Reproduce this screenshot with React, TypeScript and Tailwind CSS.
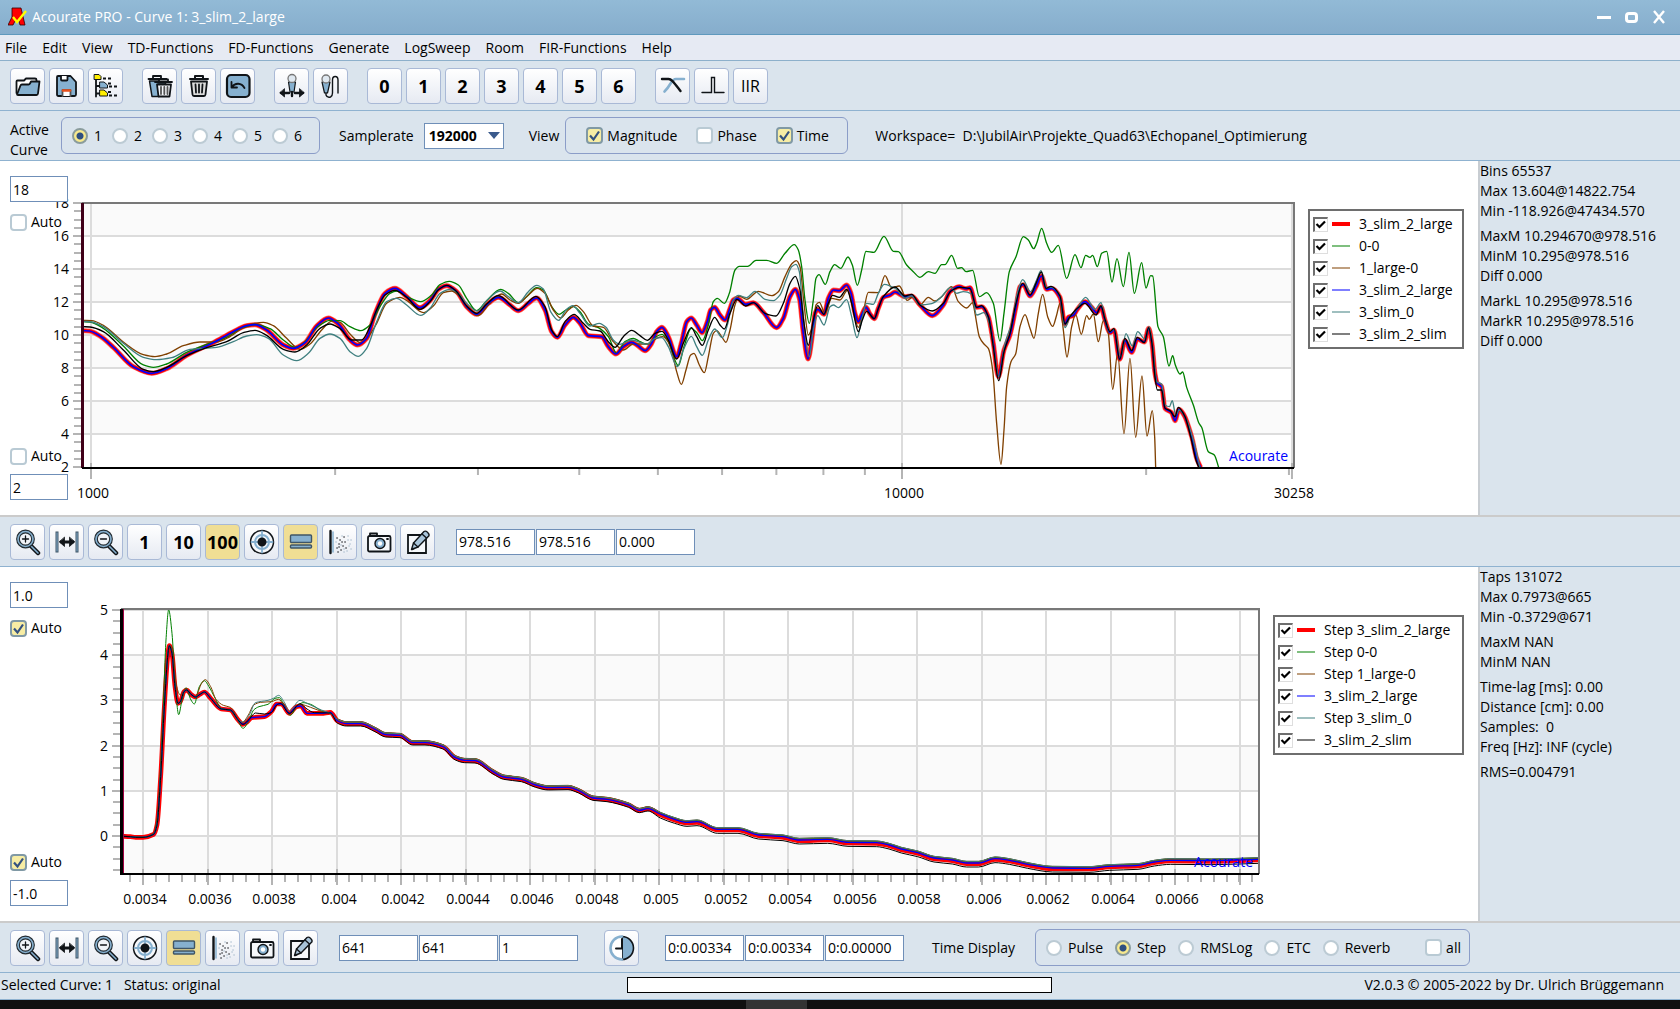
import React from "react";

type Point = [number, number];

// "x,y x,y ..." -> list of points, in thirds of a pixel
function parse(text: string): Point[] {
  return text
    .trim()
    .split(/\s+/)
    .map((pair) => pair.split(",").map(Number) as Point);
}

// monotone cubic, so that peaks and dips keep their height
function smooth(points: Point[]) {
  const n = points.length;
  const slope: number[] = [];
  for (let i = 0; i < n - 1; i++) {
    slope.push(
      (points[i + 1][1] - points[i][1]) / (points[i + 1][0] - points[i][0])
    );
  }
  const tangent = points.map((_, i) => {
    if (i === 0) return slope[0];
    if (i === n - 1) return slope[n - 2];
    const a = slope[i - 1];
    const b = slope[i];
    return a * b <= 0 ? 0 : (2 * a * b) / (a + b);
  });
  let d = `M${points[0][0]},${points[0][1]}`;
  for (let i = 0; i < n - 1; i++) {
    const [x0, y0] = points[i];
    const [x1, y1] = points[i + 1];
    const h = (x1 - x0) / 3;
    d += `C${(x0 + h).toFixed(1)},${(y0 + h * tangent[i]).toFixed(1)} ${(
      x1 - h
    ).toFixed(1)},${(y1 - h * tangent[i + 1]).toFixed(1)} ${x1},${y1}`;
  }
  return d;
}

const magMain = `250,452 268,453 300,468 340,502 400,560 455,580 500,566 560,526 640,488 700,455 740,437 765,434 800,450 850,495 880,505
915,488 950,438 985,414 1015,432 1050,480 1073,495 1100,475 1125,402 1155,340 1185,325 1220,350 1260,383 1290,362 1315,328 1340,317
1370,335 1400,380 1430,403 1465,370 1495,352 1530,375 1555,392 1585,370 1610,354 1635,390 1655,455 1672,472 1695,435 1720,412
1740,430 1765,467 1805,470 1825,500 1848,522 1870,500 1895,487 1915,498 1936,512 1955,490 1970,455 1986,442 2005,470 2030,530
2045,485 2060,425 2074,414 2090,435 2106,458 2122,425 2132,390 2144,382 2160,405 2175,420 2190,385 2200,360 2211,355 2237,373
2260,368 2290,397 2330,443 2350,415 2370,350 2386,328 2398,355 2410,460 2424,537 2438,460 2445,400 2453,388 2472,403 2485,355
2500,330 2518,332 2540,315 2553,340 2565,400 2575,425 2585,405 2598,382 2610,402 2623,416 2635,385 2650,352 2670,345 2685,336
2715,350 2735,348 2760,375 2797,407 2830,375 2850,335 2878,320 2898,326 2910,323 2930,382 2945,380 2965,410 2980,490 2995,590
3012,510 3030,465 3048,380 3060,320 3070,314 3090,348 3108,320 3124,288 3140,328 3155,325 3180,352 3195,432 3205,412 3220,406
3232,388 3255,365 3275,382 3290,398 3303,380 3315,420 3330,458 3342,450 3359,538 3375,482 3395,517 3412,477 3433,486 3446,445
3456,490 3465,580 3472,610 3485,620 3495,685 3515,698 3525,722 3537,688 3552,705 3575,770 3590,835 3602,862`;

const magSlimSlim = `250,440 270,441 310,455 370,510 430,568 460,575 500,562 560,527 620,503 680,485 730,458 765,451 800,466 850,508 885,516
920,495 960,445 990,432 1020,446 1055,480 1085,480 1110,440 1130,390 1155,345 1185,331 1220,352 1260,388 1290,365 1315,330 1340,316
1370,335 1400,378 1430,400 1460,372 1495,347 1555,390 1608,349 1635,380 1655,450 1672,470 1695,425 1722,403 1750,430 1770,448
1800,453 1825,485 1845,502 1870,470 1895,451 1920,467 1942,481 1965,460 1986,454 2005,480 2030,537 2050,490 2074,443 2090,470
2107,496 2125,450 2144,412 2160,435 2173,447 2190,400 2211,358 2237,378 2260,368 2295,400 2328,408 2350,370 2370,310 2386,289
2400,330 2412,430 2425,496 2440,420 2453,377 2472,403 2485,370 2498,346 2518,352 2540,328 2555,370 2575,455 2587,420 2600,394
2623,416 2635,385 2650,350 2685,321 2715,348 2735,343 2760,375 2797,393 2830,370 2853,333 2878,322 2910,326 2930,382 2945,377
2965,410 2980,500 2996,602 3012,515 3030,460 3048,370 3068,310 3090,345 3108,310 3124,276 3138,325 3153,319 3180,348 3195,432
3210,410 3232,385 3255,370 3288,405 3303,378 3315,418 3330,455 3342,446 3359,538 3375,475 3395,512 3412,472 3433,488 3446,443
3456,490 3465,590 3472,630 3485,630 3495,685 3510,692 3525,710 3535,682 3555,710 3572,770 3588,840 3596,862`;

const mag00 = `250,425 270,426 310,445 370,498 430,555 460,562 500,552 560,517 620,493 680,472 730,443 770,434 810,446 850,480 885,502
910,490 950,443 990,421 1020,422 1050,440 1082,452 1110,435 1140,380 1170,340 1190,333 1225,352 1262,365 1295,345 1320,314 1348,304
1375,315 1400,355 1430,392 1460,362 1502,328 1525,340 1555,368 1580,350 1610,323 1630,330 1655,380 1677,403 1695,392 1720,380
1740,395 1765,432 1795,443 1825,470 1850,520 1875,485 1900,475 1920,485 1942,493 1965,472 1986,463 2005,485 2035,557 2052,500
2074,445 2092,460 2107,482 2125,435 2140,365 2152,355 2173,370 2188,340 2205,270 2218,259 2243,259 2268,241 2300,241 2330,250
2355,220 2383,194 2395,210 2405,260 2415,360 2428,430 2440,360 2448,295 2457,284 2476,313 2490,275 2504,254 2522,265 2544,231
2557,255 2572,316 2585,270 2598,214 2622,217 2652,169 2680,214 2695,215 2720,255 2740,275 2760,292 2785,275 2805,280 2825,254
2835,254 2855,226 2873,265 2885,263 2898,275 2918,271 2938,350 2960,338 2980,370 3000,483 3012,400 3028,275 3048,230 3070,170
3085,180 3101,206 3110,190 3125,145 3140,190 3155,217 3175,196 3200,295 3225,224 3243,263 3257,226 3270,232 3278,226 3292,260
3305,220 3320,214 3336,306 3351,236 3370,320 3387,217 3403,340 3425,248 3438,324 3452,287 3458,288 3474,440 3490,470 3507,558
3518,527 3526,555 3540,582 3548,576 3560,622 3580,675 3597,730 3605,742 3625,815 3643,825 3656,862`;

const magLarge0 = `250,421 275,422 310,436 370,486 430,524 465,530 500,522 550,497 600,486 650,486 690,470 740,437 790,427 820,437 860,475
900,508 930,492 965,450 995,424 1020,427 1050,462 1082,488 1105,470 1130,430 1160,370 1200,352 1225,365 1270,398 1300,378 1330,338
1355,333 1375,345 1400,382 1435,407 1465,375 1505,342 1530,360 1555,370 1585,345 1612,325 1635,340 1660,390 1682,414 1705,390
1728,376 1750,395 1780,438 1810,442 1840,485 1870,510 1900,492 1940,492 1970,475 1988,470 2010,495 2030,575 2044,613 2058,570
2072,525 2082,520 2098,555 2113,578 2125,530 2140,460 2150,452 2165,470 2178,487 2190,450 2205,375 2218,348 2240,358 2275,334
2315,347 2335,335 2355,290 2375,252 2389,242 2400,260 2412,370 2425,465 2440,430 2448,375 2458,367 2475,400 2495,355 2520,360
2543,330 2558,380 2575,442 2590,395 2605,337 2635,338 2655,287 2675,323 2698,318 2722,361 2740,350 2760,375 2785,352 2805,363
2825,350 2855,320 2875,365 2900,384 2918,368 2925,400 2938,470 2952,492 2965,505 2978,570 2990,730 3003,853 3012,750 3020,620
3033,545 3047,522 3060,440 3075,404 3090,445 3102,475 3115,400 3128,343 3143,410 3158,439 3170,405 3180,370 3190,450 3201,531
3215,440 3227,404 3244,463 3260,407 3268,418 3280,402 3295,485 3310,422 3325,460 3338,628 3353,520 3372,761 3390,535 3407,772
3426,588 3441,768 3457,692 3464,770 3467,862`;

const magSlim0 = `250,424 275,426 310,440 370,490 430,532 470,539 515,533 570,508 650,502 700,485 740,468 770,464 805,475 850,525 890,542
925,520 960,475 990,462 1020,475 1050,515 1075,529 1100,505 1130,425 1160,365 1190,355 1220,375 1262,406 1290,385 1320,340 1350,328
1375,340 1400,370 1432,393 1460,362 1500,333 1525,350 1555,368 1585,335 1610,316 1630,327 1652,395 1676,421 1698,390 1718,377
1740,400 1770,438 1798,430 1818,442 1840,480 1860,493 1895,480 1940,493 1965,475 1985,473 2005,500 2032,560 2050,510 2074,469
2090,500 2107,526 2125,480 2144,447 2167,473 2182,435 2200,360 2215,346 2240,353 2265,334 2295,358 2320,362 2340,345 2360,295
2375,260 2388,253 2398,275 2410,410 2428,530 2440,450 2453,407 2472,435 2490,380 2500,375 2515,383 2540,359 2555,410 2571,473
2585,420 2600,370 2620,373 2635,340 2653,313 2690,328 2715,355 2735,348 2760,375 2795,371 2820,355 2853,322 2870,340 2890,335
2915,342 2930,405 2952,398 2968,430 2985,530 2996,590 3015,490 3035,430 3052,340 3068,299 3092,335 3110,300 3123,272 3140,322
3155,322 3180,348 3195,443 3210,410 3232,385 3257,352 3285,388 3303,368 3315,415 3330,455 3342,448 3362,530 3378,461 3397,498
3413,455 3435,478 3447,440 3458,500 3470,605 3485,612 3495,675 3508,680 3517,662 3527,705 3538,690 3560,720 3580,780 3600,862`;

const stepRise = `368,739 391,740 407,742 429,742 461,733 471,705 482,560 493,350 504,190 508,167 516,190 525,290 534,340`;
const stepMiddle = `541,335 552,305 560,300 573,313 586,321 600,313 613,306 632,325 664,357 691,360 713,388`;
const stepMain = `${stepRise} ${stepMiddle} 729,403 741,396 755,383 793,380 814,365 830,342 844,342 868,370 889,350 902,348 921,370 964,370 991,367`;
const stepSlimSlim = `${stepRise} ${stepMiddle} 729,403 750,385 766,369 793,372 814,368 830,345 841,340 868,370 900,341 921,357 943,368 991,369`;
const step00 = `368,739 391,740 429,742 461,730 471,690 488,400 498,150 506,60 516,130 525,270 536,374 546,330 558,293 573,330 583,342
598,290 613,272 627,290 643,320 664,355 691,362 713,390 729,415 745,395 761,360 777,350 804,343 825,325 838,323 852,345 871,376
889,352 909,338 932,343 964,362 991,370`;
const stepLarge0 = `368,739 391,740 429,742 461,733 471,705 482,560 493,350 504,190 510,165 518,190 530,290 541,315 557,296 585,322 605,280
616,269 632,290 648,328 670,346 691,352 726,398 745,375 761,345 782,337 814,335 836,328 868,370 900,343 932,352 964,364 991,370`;
const stepSlim0 = `${stepRise} ${stepMiddle} 729,396 748,375 766,338 804,331 820,325 836,316 852,335 868,362 900,331 921,340 964,360 991,370`;

const stepTail = parse(`1013,393 1039,401 1082,401 1125,418 1157,434 1200,436 1238,458 1275,458 1329,470 1366,503 1393,511 1425,512
1479,545 1511,561 1564,568 1607,585 1645,593 1704,592 1736,602 1779,624 1821,628 1886,645 1918,661 1944,656 1981,672 2024,688
2061,697 2091,695 2153,718 2214,718 2275,735 2349,740 2398,750 2483,748 2544,757 2630,758 2667,765 2704,777 2753,788 2802,804
2857,810 2900,819 2936,819 2985,806 3028,811 3083,823 3157,834 3267,835 3328,829 3414,826 3463,816 3512,811 3634,812 3775,808`);

// all step responses share the decay, a little apart from each other
function withTail(head: string, near: number, far: number) {
  const tail = stepTail.map(
    ([x, y]): Point => [x, y + (x < 1950 ? near : far)]
  );
  return [...parse(head), ...tail];
}

const magTraces = [
  { color: "#ff6464", width: 15, points: parse(magMain) },
  { color: "#ff0000", width: 11, points: parse(magMain) },
  { color: "#008000", width: 4, points: parse(mag00) },
  { color: "#804000", width: 4, points: parse(magLarge0) },
  { color: "#0000ff", width: 5, points: parse(magMain) },
  { color: "#408080", width: 4, points: parse(magSlim0) },
  { color: "#000000", width: 4, points: parse(magSlimSlim) },
];

const stepTraces = [
  { color: "#ff0000", width: 14, points: withTail(stepMain, 0, 2) },
  { color: "#008000", width: 3, points: withTail(step00, -5, -4) },
  { color: "#804000", width: 3, points: withTail(stepLarge0, -6, -5) },
  { color: "#0000ff", width: 4, points: withTail(stepMain, 0, 0) },
  { color: "#408080", width: 3, points: withTail(stepSlim0, -5, -5) },
  { color: "#000000", width: 3, points: withTail(stepSlimSlim, 7, 12) },
];

function Traces({ list, top }: { list: typeof magTraces; top: number }) {
  return (
    <g
      transform={`translate(0 ${top}) scale(0.33333)`}
      fill="none"
      strokeLinejoin="round"
    >
      {list.map((trace, idx) => (
        <path
          key={idx}
          d={smooth(trace.points)}
          stroke={trace.color}
          strokeWidth={trace.width}
        />
      ))}
    </g>
  );
}

function MagnitudePlot() {
  const majors = [18, 16, 14, 12, 10, 8, 6, 4, 2];
  const yOf = (v: number) => 203 + (18 - v) * 16.5;
  const xOf = (f: number) => 91 + 811 * Math.log10(f / 1000);
  const minorFreq = [2, 3, 4, 5, 6, 7, 8, 9, 20, 30].map((k) => k * 1000);
  return (
    <svg
      viewBox="68 161 1240 354"
      className="block h-auto w-full overflow-visible"
      fontFamily='"Open Sans", sans-serif'
      fontSize="14"
      role="img"
      aria-label="Magnitude"
    >
      {[18, 14, 10, 6].map((v) => (
        <rect key={v} x="83" y={yOf(v)} width="1210" height="33" fill="#fafafa" />
      ))}
      {majors.slice(1, 8).map((v) => (
        <path key={v} d={`M84 ${yOf(v)}H1292`} stroke="#dcdcdc" strokeWidth="2" />
      ))}
      {[1000, 10000, 30258].map((f) => (
        <g key={f}>
          <path d={`M${xOf(f)} 204V467`} stroke="#dcdcdc" strokeWidth="2" />
          <path d={`M${xOf(f)} 463V479`} stroke="#b4b4b4" strokeWidth="2" />
          <text x={xOf(f) + 2} y="498" textAnchor="middle">
            {f}
          </text>
        </g>
      ))}
      {minorFreq.map((f) => (
        <path key={f} d={`M${xOf(f)} 468V475`} stroke="#b4b4b4" strokeWidth="2" />
      ))}
      {Array.from({ length: 33 }, (_, i) => (
        <path
          key={i}
          d={`M${i % 4 === 0 ? 73 : 74} ${Math.round(203 + i * 8.25)}H82`}
          stroke="#b4b4b4"
          strokeWidth="2"
        />
      ))}
      {majors.map((v) => (
        <text key={v} x="69" y={yOf(v) + 5} textAnchor="end">
          {v}
        </text>
      ))}
      <clipPath id="mag-area">
        <rect x="83" y="203" width="1210" height="264" />
      </clipPath>
      <g clipPath="url(#mag-area)">
        <Traces list={magTraces} top={180} />
      </g>
      <path d="M82 203H1294V468" fill="none" stroke="#787878" strokeWidth="2" />
      <path d="M82.5 203V468" stroke="#400018" strokeWidth="3" />
      <path d="M82 468H1294" stroke="#000" strokeWidth="2" />
      <text x="1288" y="461" textAnchor="end" fill="#0000ff">
        Acourate
      </text>
    </svg>
  );
}

function StepPlot() {
  const yOf = (v: number) => 836 - Math.round(v * 45.2);
  const labels = [
    "0.0034", "0.0036", "0.0038", "0.004", "0.0042", "0.0044",
    "0.0046", "0.0048", "0.005", "0.0052", "0.0054", "0.0056",
    "0.0058", "0.006", "0.0062", "0.0064", "0.0066", "0.0068",
  ];
  const xOf = (i: number) => Math.round(143 + i * 64.53);
  return (
    <svg
      viewBox="68 567 1205 354"
      className="block h-auto w-full overflow-visible"
      fontFamily='"Open Sans", sans-serif'
      fontSize="14"
      role="img"
      aria-label="Step response"
    >
      <rect x="123" y={yOf(4)} width="1136" height="45" fill="#fafafa" />
      <rect x="123" y={yOf(2)} width="1136" height="45" fill="#fafafa" />
      <rect x="123" y={yOf(0)} width="1136" height="38" fill="#fafafa" />
      {[5, 4, 3, 2, 1, 0].map((v) => (
        <g key={v}>
          <path d={`M123 ${yOf(v)}H1258`} stroke="#dcdcdc" strokeWidth="2" />
          <path d={`M112 ${yOf(v)}H121`} stroke="#b4b4b4" strokeWidth="2" />
          <text x="108" y={yOf(v) + 5} textAnchor="end">
            {v}
          </text>
        </g>
      ))}
      {Array.from({ length: 24 }, (_, i) => (
        <path
          key={i}
          d={`M113 ${Math.round(610 + i * 11.3)}H121`}
          stroke="#b4b4b4"
          strokeWidth="2"
        />
      ))}
      {Array.from({ length: 88 }, (_, i) => (
        <path
          key={i}
          d={`M${Math.round(130 + i * 12.9)} 875V882`}
          stroke="#b4b4b4"
          strokeWidth="2"
        />
      ))}
      {labels.map((label, i) => (
        <g key={label}>
          <path d={`M${xOf(i)} 610V874`} stroke="#dcdcdc" strokeWidth="2" />
          <path d={`M${xOf(i)} 869V885`} stroke="#b4b4b4" strokeWidth="2" />
          <text x={xOf(i) + 2} y="904" textAnchor="middle">
            {label}
          </text>
        </g>
      ))}
      <path d="M121 609H1259V874" fill="none" stroke="#787878" strokeWidth="2" />
      <clipPath id="step-area">
        <rect x="122" y="609" width="1136" height="265" />
      </clipPath>
      <g clipPath="url(#step-area)">
        <Traces list={stepTraces} top={590} />
      </g>
      <text x="1253" y="867" textAnchor="end" fill="#0000ff">
        Acourate
      </text>
      <path d="M121.5 609V875" stroke="#000" strokeWidth="3" />
      <path d="M123.5 609V873" stroke="#a00040" strokeWidth="1" />
      <path d="M121 874H1259" stroke="#000" strokeWidth="2" />
    </svg>
  );
}

function Icon({ children }: { children: React.ReactNode }) {
  return (
    <svg
      viewBox="0 0 28 28"
      className="h-7 w-7"
      fill="none"
      stroke="#101418"
      strokeWidth="1.8"
      strokeLinejoin="round"
      strokeLinecap="round"
      aria-hidden="true"
    >
      {children}
    </svg>
  );
}

const icons: Record<string, React.ReactNode> = {
  Open: (
    <Icon>
      <path d="M2.500 21V9.500q0-1 1-1h6.500l2-2h9q1.500 0 1.500 1.500v2" fill="#fff" />
      <path d="M3 22.500l3.500-9q.4-1 1.400-1h6.600q1 0 1.500-1l1-2h8.500l-1.500 12q-.2 1.500-1.500 1.500H4q-1 0-1-.5z" fill="#86b0cf" />
    </Icon>
  ),
  Save: (
    <Icon>
      <path d="M5 4h12.500l5.500 6v12.500q0 1.500-1.500 1.500h-16Q4 24 4 22.500V5q0-1 1-1z" fill="#86b0cf" />
      <path d="M8 4v3.500q0 1 1 1h4.500q1 0 1-1V4" fill="#fff" />
      <path d="M9.500 24v-6h8v6" fill="#fff" stroke="#555" />
      <path d="M10 18.500h7" stroke="#e8501c" strokeWidth="2.500" />
    </Icon>
  ),
  Tree: (
    <Icon>
      <path d="M4 6v18.500M4 14h5M4 21.500h5" />
      <path d="M2.500 2.500h4.500l2 2v3H2.500z" fill="#ffee00" strokeWidth="1" />
      <path d="M8 10h4l3.500 3v3H8z" fill="#86b0cf" strokeWidth="1" />
      <path d="M8 18h4l3.500 3v3H8z" fill="#ffee00" strokeWidth="1" />
      <path d="M11 6.500h10M17 14.500h9M17 23.500h9M16 11.500h5M16 20h5" strokeDasharray="3 2" strokeLinecap="butt" />
    </Icon>
  ),
  "Delete all": (
    <Icon>
      <path d="M2.500 7h18M7 7V4h8v3" />
      <path d="M3.500 9h16v3H12l1 12.500H6z" fill="#86b0cf" strokeWidth="1.500" />
      <path d="M9 10h17M13 10V7.500h9V10M11 12.500h14l-1.500 12H12.500z" fill="#f4f6fa" />
      <path d="M15 15v7M18.300 15v7M21.500 15v7" stroke="#555" />
    </Icon>
  ),
  Delete: (
    <Icon>
      <path d="M5 7h18M10 7V4h8v3" strokeWidth="2" />
      <path d="M6 9.500h16l-1.500 13q-.2 1.500-1.500 1.500H9q-1.300 0-1.500-1.500z" fill="#dcdcdc" />
      <path d="M10.500 12.500l.5 8M14 12.500v8M17.500 12.500l-.5 8" />
    </Icon>
  ),
  Undo: (
    <Icon>
      <rect x="3" y="3" width="22.500" height="22" rx="4" fill="#86b0cf" strokeWidth="2.200" />
      <path d="M7.500 10v5.500H13M8 15c3-4.500 9.500-4.500 12.500 1" />
    </Icon>
  ),
  "Microphone level": (
    <Icon>
      <path d="M10.500 10h7l-1.500 10h-4z" fill="#86b0cf" strokeWidth="1.200" />
      <circle cx="14" cy="6.500" r="4" fill="#dfe8f0" stroke="#777" strokeWidth="1.300" />
      <path d="M14 20v4M3 21h8M17 21h8" strokeWidth="2.400" />
      <path d="M6.500 17v8L2 21zM21.500 17v8l4.500-4z" fill="#101418" strokeWidth=".8" />
    </Icon>
  ),
  Microphone: (
    <Icon>
      <path d="M5 10h8l-2.500 11h-3z" fill="#86b0cf" strokeWidth="1.200" />
      <circle cx="9" cy="7" r="4" fill="#dfe8f0" stroke="#777" strokeWidth="1.300" />
      <path d="M9 21v2q1 3 4.500 2 2-1 2-4V8q0-3.500 2.700-3.500T21 8v13" strokeWidth="1.400" />
    </Icon>
  ),
  Crossover: (
    <Icon>
      <path d="M5.500 19.500C12 13.500 12 7 17 7h8" stroke="#86b0cf" strokeWidth="2.600" />
      <path d="M3 7h6.500c3 0 5 3 12 12" strokeWidth="2.400" />
    </Icon>
  ),
  Pulse: (
    <Icon>
      <path d="M4 20.500h9.500v-15h3v15H26" strokeWidth="1.400" strokeLinejoin="miter" />
    </Icon>
  ),
  "Zoom in": (
    <Icon>
      <path d="M16 17l8 8" strokeWidth="4.500" />
      <path d="M17 18l7 7" stroke="#86b0cf" strokeWidth="1.600" />
      <circle cx="11.500" cy="11" r="7.500" stroke="#222a30" strokeWidth="3.800" fill="#f0f3f8" />
      <circle cx="11.500" cy="11" r="7.500" stroke="#86b0cf" strokeWidth="1.600" />
      <path d="M8.500 11h6M11.500 8v6" strokeWidth="1.300" />
    </Icon>
  ),
  "Zoom out": (
    <Icon>
      <path d="M16 17l8 8" strokeWidth="4.500" />
      <path d="M17 18l7 7" stroke="#86b0cf" strokeWidth="1.600" />
      <circle cx="11.500" cy="11" r="7.500" stroke="#222a30" strokeWidth="3.800" fill="#f0f3f8" />
      <circle cx="11.500" cy="11" r="7.500" stroke="#86b0cf" strokeWidth="1.600" />
      <path d="M8.500 11h6" strokeWidth="1.300" />
    </Icon>
  ),
  "Fit width": (
    <Icon>
      <path d="M4 3.500v21M24 3.500v21" stroke="#3f5566" strokeWidth="3" strokeLinecap="butt" />
      <path d="M4 4.500v19M24 4.500v19" stroke="#86b0cf" strokeWidth="1" strokeLinecap="butt" />
      <path d="M8 14h12" strokeWidth="2.800" />
      <path d="M11.500 9.500v9L6.500 14zM16.500 9.500v9l5-4.500z" fill="#101418" strokeWidth=".8" />
    </Icon>
  ),
  Center: (
    <Icon>
      <circle cx="14" cy="14" r="11.500" strokeWidth="1.500" fill="#f6f8fb" />
      <circle cx="14" cy="14" r="7" stroke="#86b0cf" strokeWidth="2" />
      <path d="M14 3.500v6M14 18.500v6M3.500 14h6M18.500 14h6" stroke="#86b0cf" />
      <circle cx="14" cy="14" r="3.600" fill="#101418" />
    </Icon>
  ),
  Lines: (
    <Icon>
      <rect x="3.500" y="7" width="21" height="7.500" rx="1" fill="#86b0cf" strokeWidth="1.400" stroke="#3f5566" />
      <rect x="3.500" y="17" width="21" height="3" rx="1" fill="#86b0cf" strokeWidth="1.400" stroke="#3f5566" />
    </Icon>
  ),
  Scatter: (
    <Icon>
      <path d="M4.500 3v22" strokeWidth="2.400" />
      <path d="M7 4v20" stroke="#86b0cf" strokeWidth="1.500" />
      <path
        d="M11 20h.1M13 16h.1M15 22h.1M12 24h.1M17 18h.1M14 12h.1M11 10h.1M19 14h.1M18 9h.1M16 14h.1M13 19h.1M20 20h.1"
        strokeWidth="1.400"
      />
      <path
        d="M22 12h.1M24 16h.1M21 23h.1M25 21h.1M23 18h.1M16 8h.1M22 8h.1M18 24h.1M25 12h.1M10 14h.1M15 17h.1M18 21h.1"
        stroke="#a9bccd"
        strokeWidth="1.400"
      />
    </Icon>
  ),
  Camera: (
    <Icon>
      <path d="M5 8V5.500h7V8" />
      <rect x="3" y="8" width="22.500" height="15.500" rx="1.500" fill="#f6f8fb" />
      <circle cx="15" cy="15.500" r="5" fill="#86b0cf" strokeWidth="1.400" />
      <circle cx="15" cy="15.500" r="2.200" fill="#fff" strokeWidth="0" />
      <path d="M22 11h1" />
    </Icon>
  ),
  Edit: (
    <Icon>
      <path d="M4 7h18v18H4z" fill="#f6f8fb" strokeLinejoin="miter" />
      <path d="M7.500 21.500l2-6.500L20 3.500q1.500-1 3.500.7t1.500 3.500L14 19z" fill="#a9c4da" strokeWidth="1.400" />
      <path d="M9.500 15l4.500 4M18 6l4.500 4M8 21.500l2-1" strokeWidth="1.400" />
    </Icon>
  ),
  Clock: (
    <Icon>
      <path d="M14 2.500a11.500 11.500 0 0 1 0 23z" fill="#86b0cf" strokeWidth="1.600" />
      <path d="M14 2.500a11.500 11.500 0 0 0 0 23" stroke="#86b0cf" strokeWidth="2.600" fill="#fff" />
      <path d="M14 5v9.500H8" strokeWidth="2" />
    </Icon>
  ),
};

function ToolButton({ name, active }: { name: string; active?: boolean }) {
  const icon = icons[name];
  return (
    <button
      type="button"
      aria-label={icon ? name : undefined}
      className={`flex h-9 w-[35px] shrink-0 items-center justify-center rounded-sm border border-[#a9b9d6] ${
        active
          ? "bg-[#f0de94]"
          : "bg-gradient-to-b from-white to-[#e6eaf2]"
      } ${name === "IIR" ? "text-base" : "text-lg font-bold"}`}
    >
      {icon ?? name}
    </button>
  );
}

function ToolGroup({ names, active }: { names: string[]; active?: string[] }) {
  return (
    <div className="flex gap-1">
      {names.map((name) => (
        <ToolButton key={name} name={name} active={active?.includes(name)} />
      ))}
    </div>
  );
}

function Check({ label, checked }: { label: string; checked?: boolean }) {
  return (
    <label className="flex items-center gap-1">
      <span className="grid">
        <input
          type="checkbox"
          defaultChecked={checked}
          className="peer col-start-1 row-start-1 h-[17px] w-[17px] appearance-none rounded-sm border-2 border-[#b9cad4] bg-white checked:border-[#8099a5] checked:bg-[#f7eda4]"
        />
        <svg
          viewBox="0 0 17 17"
          className="pointer-events-none col-start-1 row-start-1 hidden h-[17px] w-[17px] peer-checked:block"
          fill="none"
          stroke="#35527f"
          strokeWidth="2.2"
        >
          <path d="M4 8.500l3.500 4L13 4.500" />
        </svg>
      </span>
      {label}
    </label>
  );
}

function Radio({
  group,
  label,
  checked,
}: {
  group: string;
  label: string;
  checked?: boolean;
}) {
  return (
    <label className="flex items-center gap-1.5">
      <input
        type="radio"
        name={group}
        defaultChecked={checked}
        className="h-4 w-4 appearance-none rounded-full border-2 border-[#bccbd4] bg-white checked:border-[#8a9c9c] checked:bg-[radial-gradient(circle,#2f4f80_0_3px,#f7e98e_4px)]"
      />
      {label}
    </label>
  );
}

function Field({
  name,
  value,
  narrow,
}: {
  name: string;
  value: string;
  narrow?: boolean;
}) {
  return (
    <input
      type="text"
      aria-label={name}
      defaultValue={value}
      className={`h-[26px] border border-[#6f8fb8] bg-white px-0.5 ${
        narrow ? "w-[58px]" : "w-[79px]"
      }`}
    />
  );
}

function RangeColumn({
  upper,
  lower,
  auto,
}: {
  upper: string;
  lower: string;
  auto: boolean;
}) {
  return (
    <div className="z-10 flex w-[68px] shrink-0 flex-col justify-between py-[15px] pl-2.5">
      <div className="flex flex-col gap-2.5">
        <Field name="Upper limit" value={upper} narrow />
        <Check label="Auto" checked={auto} />
      </div>
      <div className="flex flex-col gap-2">
        <Check label="Auto" checked={auto} />
        <Field name="Lower limit" value={lower} narrow />
      </div>
    </div>
  );
}

const swatches = [
  "h-1 bg-[#ff0000]",
  "h-0.5 bg-[#7fbf7f]",
  "h-0.5 bg-[#bf9f7f]",
  "h-0.5 bg-[#7f7fff]",
  "h-0.5 bg-[#9fbfbf]",
  "h-0.5 bg-[#7f7f7f]",
];

function Legend({ names, wide }: { names: string[]; wide?: boolean }) {
  return (
    <div
      className={`mt-12 mr-3.5 flex shrink-0 flex-col self-start border-2 border-[#6e6e6e] bg-white py-0.5 pl-[3px] whitespace-nowrap ${
        wide ? "w-[191px]" : "w-[156px]"
      }`}
    >
      {names.map((name, idx) => (
        <label key={idx} className="flex h-[22px] items-center">
          <span className="grid">
            <input
              type="checkbox"
              defaultChecked
              className="peer col-start-1 row-start-1 h-[15px] w-[15px] appearance-none border-t-2 border-r border-b border-l-2 border-t-[#6e6e6e] border-r-[#dedede] border-b-[#dedede] border-l-[#6e6e6e] bg-white"
            />
            <svg
              viewBox="0 0 15 15"
              className="pointer-events-none col-start-1 row-start-1 hidden h-[15px] w-[15px] peer-checked:block"
              fill="none"
              stroke="#000"
              strokeWidth="2.2"
            >
              <path d="M3.500 7l3 3L12 4.500" />
            </svg>
          </span>
          <span className={`ml-1 w-[18px] ${swatches[idx]}`} />
          <span className="ml-[9px]">{name}</span>
        </label>
      ))}
    </div>
  );
}

function Sidebar({ groups }: { groups: string[][] }) {
  return (
    <aside className="flex w-[202px] shrink-0 flex-col gap-[5px] border-l-2 border-[#c8cdd2] bg-[#dae4ed] leading-5">
      {groups.map((group, idx) => (
        <div key={idx}>
          {group.map((line) => (
            <p key={line} className="whitespace-pre">
              {line}
            </p>
          ))}
        </div>
      ))}
    </aside>
  );
}

const menus = [
  "File", "Edit", "View", "TD-Functions", "FD-Functions",
  "Generate", "LogSweep", "Room", "FIR-Functions", "Help",
];

function App() {
  return (
    <div className="flex min-h-screen flex-col bg-[#dae4ed] font-['Open_Sans',sans-serif] text-sm text-black">
      <header className="flex h-[35px] items-center border-b border-[#5f99bd] bg-gradient-to-b from-[#92bad6] to-[#86adcc] pr-3.5 pl-2 text-white">
        <svg viewBox="0 0 20 20" className="h-5 w-5" aria-hidden="true">
          <path d="M4 1h9l4 17h-5l-1-4H7l-2 4H0l4-8z" fill="#f00" stroke="#300" strokeWidth=".8" />
          <path d="M5 10l4 5L18 4" fill="none" stroke="#ff0" strokeWidth="2.400" />
        </svg>
        <h1 className="ml-1 flex-1">Acourate PRO - Curve 1: 3_slim_2_large</h1>
        <div className="flex items-center gap-3.5">
          <button type="button" aria-label="Minimize" className="flex h-4 w-3.5 items-center">
            <span className="h-[3px] w-3.5 bg-white" />
          </button>
          <button
            type="button"
            aria-label="Maximize"
            className="h-[11px] w-[13px] rounded-sm border-[3px] border-white"
          />
          <button type="button" aria-label="Close">
            <svg viewBox="0 0 14 14" className="h-3.5 w-3.5" stroke="#fff" strokeWidth="2.400">
              <path d="M2 1l10 12M12 1L2 13" />
            </svg>
          </button>
        </div>
      </header>

      <nav className="flex h-[26px] items-center gap-[15px] border-b border-[#8db0cb] bg-[#e6eaf3] pl-[5px]">
        {menus.map((menu) => (
          <button key={menu} type="button">
            {menu}
          </button>
        ))}
      </nav>

      <div className="flex h-[50px] items-center gap-[19px] border-b border-[#8fb2d0] pl-2.5">
        <ToolGroup names={["Open", "Save", "Tree"]} />
        <ToolGroup names={["Delete all", "Delete", "Undo"]} />
        <ToolGroup names={["Microphone level", "Microphone"]} />
        <ToolGroup names={["0", "1", "2", "3", "4", "5", "6"]} />
        <ToolGroup names={["Crossover", "Pulse", "IIR"]} />
      </div>

      <div className="flex h-[50px] items-center border-b border-[#8fb2d0] pl-2.5">
        <p className="w-[51px] pt-2 leading-5">Active Curve</p>
        <div className="flex h-[37px] w-[259px] items-center gap-2.5 rounded-md border border-[#8b9dc8] pl-2.5">
          {["1", "2", "3", "4", "5", "6"].map((n) => (
            <Radio key={n} group="curve" label={n} checked={n === "1"} />
          ))}
        </div>
        <label htmlFor="samplerate" className="ml-[19px]">
          Samplerate
        </label>
        <div className="ml-2.5 grid">
          <select
            id="samplerate"
            defaultValue="192000"
            className="col-start-1 row-start-1 h-[26px] w-20 appearance-none border border-[#6f8fb8] bg-white pl-1 font-bold"
          >
            <option>192000</option>
          </select>
          <svg
            viewBox="0 0 12 7"
            className="pointer-events-none col-start-1 row-start-1 mr-1 h-[7px] w-3 place-self-center justify-self-end"
          >
            <path d="M0 0h12L6 7z" fill="#3a5a8c" />
          </svg>
        </div>
        <span className="ml-[25px]">View</span>
        <div className="ml-1.5 flex h-[37px] w-[283px] items-center gap-[19px] rounded-md border border-[#8b9dc8] pl-5">
          <Check label="Magnitude" checked />
          <Check label="Phase" />
          <Check label="Time" checked />
        </div>
        <p className="ml-[27px] whitespace-pre">
          {"Workspace=  D:\\JubilAir\\Projekte_Quad63\\Echopanel_Optimierung"}
        </p>
      </div>

      <section className="flex border-b-2 border-[#cbcbcb] bg-white">
        <RangeColumn upper="18" lower="2" auto={false} />
        <div className="min-w-0 flex-1">
          <MagnitudePlot />
        </div>
        <Legend
          names={[
            "3_slim_2_large", "0-0", "1_large-0",
            "3_slim_2_large", "3_slim_0", "3_slim_2_slim",
          ]}
        />
        <Sidebar
          groups={[
            ["Bins 65537", "Max 13.604@14822.754", "Min -118.926@47434.570"],
            ["MaxM 10.294670@978.516", "MinM 10.295@978.516", "Diff 0.000"],
            ["MarkL 10.295@978.516", "MarkR 10.295@978.516", "Diff 0.000"],
          ]}
        />
      </section>

      <div className="flex h-[50px] items-center border-b border-[#8fb2d0] pl-2.5">
        <ToolGroup
          names={[
            "Zoom in", "Fit width", "Zoom out", "1", "10", "100",
            "Center", "Lines", "Scatter", "Camera", "Edit",
          ]}
          active={["100", "Lines"]}
        />
        <div className="ml-[21px] flex gap-px">
          <Field name="Left marker" value="978.516" />
          <Field name="Right marker" value="978.516" />
          <Field name="Difference" value="0.000" />
        </div>
      </div>

      <section className="flex border-b-2 border-[#cbcbcb] bg-white">
        <RangeColumn upper="1.0" lower="-1.0" auto />
        <div className="min-w-0 flex-1">
          <StepPlot />
        </div>
        <Legend
          wide
          names={[
            "Step 3_slim_2_large", "Step 0-0", "Step 1_large-0",
            "3_slim_2_large", "Step 3_slim_0", "3_slim_2_slim",
          ]}
        />
        <Sidebar
          groups={[
            ["Taps 131072", "Max 0.7973@665", "Min -0.3729@671"],
            ["MaxM NAN", "MinM NAN"],
            [
              "Time-lag [ms]: 0.00",
              "Distance [cm]: 0.00",
              "Samples:  0",
              "Freq [Hz]: INF (cycle)",
            ],
            ["RMS=0.004791"],
          ]}
        />
      </section>

      <div className="flex h-[50px] items-center border-b border-[#8fb2d0] pl-2.5">
        <ToolGroup
          names={[
            "Zoom in", "Fit width", "Zoom out", "Center",
            "Lines", "Scatter", "Camera", "Edit",
          ]}
          active={["Lines"]}
        />
        <div className="ml-[21px] flex gap-px">
          <Field name="Left sample" value="641" />
          <Field name="Right sample" value="641" />
          <Field name="Sample count" value="1" />
        </div>
        <div className="mx-[26px]">
          <ToolGroup names={["Clock"]} />
        </div>
        <div className="flex gap-px">
          <Field name="Left time" value="0:0.00334" />
          <Field name="Right time" value="0:0.00334" />
          <Field name="Time span" value="0:0.00000" />
        </div>
        <span className="ml-7">Time Display</span>
        <div className="ml-5 flex h-[37px] w-[435px] items-center gap-3 rounded-md border border-[#8b9dc8] pr-2 pl-2.5">
          <Radio group="display" label="Pulse" />
          <Radio group="display" label="Step" checked />
          <Radio group="display" label="RMSLog" />
          <Radio group="display" label="ETC" />
          <Radio group="display" label="Reverb" />
          <div className="ml-auto">
            <Check label="all" />
          </div>
        </div>
      </div>

      <footer className="flex h-[27px] items-center border-b border-[#8fb2d0] pr-4 pb-0.5 pl-px">
        <p className="w-[626px] whitespace-pre">
          {"Selected Curve: 1   Status: original"}
        </p>
        <div className="h-4 w-[425px] border border-black bg-white" />
        <p className="ml-auto">V2.0.3 © 2005-2022 by Dr. Ulrich Brüggemann</p>
      </footer>

      <div className="flex flex-1 bg-[#101010]">
        <div className="ml-[746px] w-[61px] bg-[#333333]" />
      </div>
    </div>
  );
}

export default App;
